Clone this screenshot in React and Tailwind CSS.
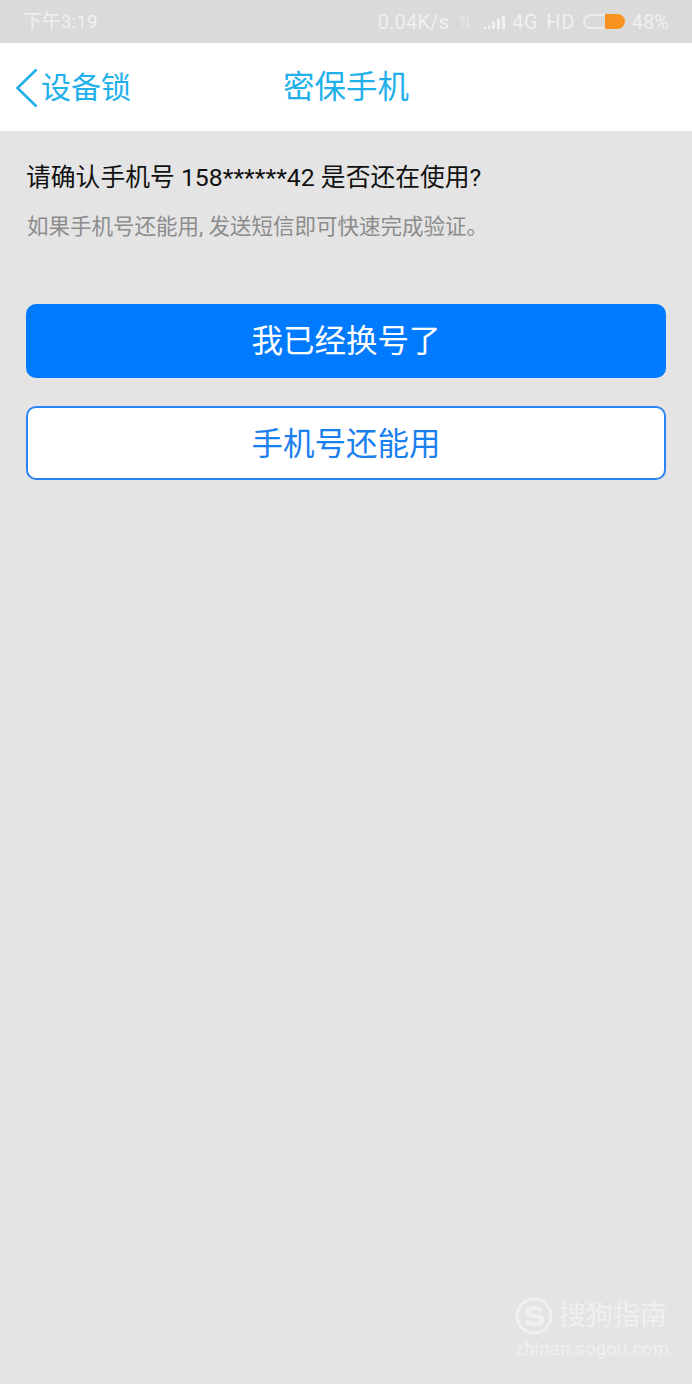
const FONT = 'font-["Roboto","Noto_Sans_CJK_SC",sans-serif]';

const SignalIcon = () => (
  <svg width="22" height="16" viewBox="0 0 22 16" fill="#f1f1f1">
    <rect x="0" y="13" width="2" height="2" />
    <rect x="4" y="11" width="2" height="4" />
    <rect x="8" y="8" width="3" height="7" />
    <rect x="13" y="5" width="3" height="10" />
    <rect x="18" y="2" width="3" height="13" />
  </svg>
);

const DataArrows = () => (
  <svg width="12" height="18" viewBox="0 0 14 18" fill="none" stroke="#e4e4e4" strokeWidth="2">
    <path d="M4 17V3M1 6l3-4 3 4" />
    <path d="M10 1v14M7 12l3 4 3-4" />
  </svg>
);

const Battery = () => (
  <div className="relative h-[15px] w-[42px] rounded-full border-2 border-[#ececec]">
    <div className="absolute right-[-2px] top-[-2px] bottom-[-2px] w-[20px] rounded-r-full rounded-l-[2px] bg-[#f7931e]" />
  </div>
);

const StatusBar = () => (
  <div className="flex h-[43px] items-center justify-between bg-[#dadada] pl-[23px] pr-[23px] text-[20px] text-[#f0f0f0]">
    <span className="pt-[2px] text-[19px]">下午3:19</span>
    <div className="flex items-center">
      <span className="tracking-[0.2px]">0.04K/s</span>
      <span className="ml-[10px]"><DataArrows /></span>
      <span className="ml-[13px]"><SignalIcon /></span>
      <span className="ml-[6px] tracking-[0.6px]">4G</span>
      <span className="ml-[8px] tracking-[0.6px]">HD</span>
      <span className="ml-[8px]"><Battery /></span>
      <span className="ml-[7px]">48%</span>
    </div>
  </div>
);

const NavBar = () => (
  <div className="relative flex h-[88px] items-center justify-center bg-white text-[#21b0ea]">
    <div className="absolute left-[15px] top-[24px] flex items-center">
      <svg width="24" height="40" viewBox="0 0 24 40" fill="none" stroke="#21b0ea" strokeWidth="2.6">
        <path d="M21.5 1.5 2.5 20l19 18.5" />
      </svg>
      <span className="ml-[2px] pt-[1px] text-[30px] leading-[40px]">设备锁</span>
    </div>
    <span className="pt-[2px] text-[31.5px] leading-[42px]">密保手机</span>
  </div>
);

const Watermark = () => (
  <div className="absolute left-[515px] top-[1297px] flex w-[155px] flex-col text-[#f0f0f0]">
    <div className="flex items-center">
      <svg width="38" height="38" viewBox="0 0 38 38" fill="none">
        <circle cx="19" cy="19" r="17" stroke="#f0f0f0" strokeWidth="3" />
        <path d="M27 13.500c-2-1.600-5-2.500-8-2.500-4 0-7 1.500-7 4.200 0 5.400 15 2.400 15 7.800 0 2.700-3 4-7.500 4-3.500 0-6.500-1-8.500-2.800" stroke="#f0f0f0" strokeWidth="4" />
      </svg>
      <span className="ml-[6px] text-[27px] leading-[38px]">搜狗指南</span>
    </div>
    <span className="mt-[4px] text-[18px] leading-[20px] tracking-[0.4px]">zhinan.sogou.com</span>
  </div>
);

export default function App() {
  return (
    <div className={`relative h-[1384px] w-[692px] overflow-hidden bg-[#e4e4e4] ${FONT}`}>
      <StatusBar />
      <NavBar />
      <div className="px-[26px]">
        <p className="mt-[30px] whitespace-nowrap text-[24.8px] leading-[34px] text-[#111111]">请确认手机号 158******42 是否还在使用?</p>
        <p className="mt-[18px] whitespace-nowrap pl-[1px] text-[21.5px] leading-[28px] text-[#8c8c8c]">如果手机号还能用, 发送短信即可快速完成验证。</p>
        <button className="mt-[63px] block h-[74px] w-full rounded-[10px] bg-[#007aff] pt-[2px] text-[31.5px] text-white">我已经换号了</button>
        <button className="mt-[28px] block h-[74px] w-full rounded-[10px] border-2 border-[#2b84f5] bg-white pt-[3px] text-[31.5px] text-[#1a80f0]">手机号还能用</button>
      </div>
      <Watermark />
    </div>
  );
}
